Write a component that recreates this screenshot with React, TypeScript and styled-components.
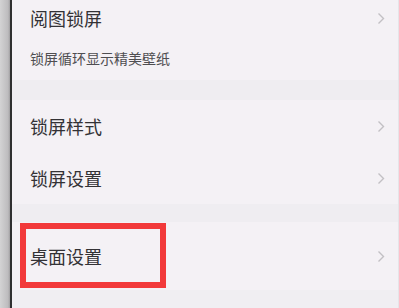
import React from "react";
import styled, { createGlobalStyle } from "styled-components";

const Global = createGlobalStyle`
  html, body { margin: 0; padding: 0; }
  body { width: 399px; height: 308px; overflow: hidden; background: #f3f0f4; }
`;

const Page = styled.div`
  display: flex;
  width: 399px;
  height: 308px;
  font-family: "Noto Sans CJK SC", "Noto Sans", sans-serif;
  background: #f4f1f5;
`;

const Edge = styled.div`
  width: 10px;
  flex: none;
  background: linear-gradient(to right, #d3d3d4, #bdbcbe 80%, #a09fa1);
  border-right: 2px solid #2f2f30;
`;

const Content = styled.div`
  flex: 1;
  display: flex;
  flex-direction: column;
  border-right: 1px solid #e6e4e8;
`;

const Row = styled.div<{ $h: number }>`
  position: relative;
  height: ${(p) => p.$h}px;
  display: flex;
  align-items: center;
  justify-content: space-between;
  padding: 0 13px 0 18px;
  flex: none;
`;

const Title = styled.span`
  font-size: 18px;
  line-height: 1;
  color: #333235;
`;

const Sub = styled.span`
  font-size: 14px;
  line-height: 1;
  color: #4f4e51;
`;

const Band = styled.div<{ $h: number }>`
  height: ${(p) => p.$h}px;
  flex: none;
  background: #efedf1;
`;

const Bottom = styled.div`
  flex: 1;
  background: #f0eef2;
`;

const Highlight = styled.div`
  position: absolute;
  left: 8px;
  top: 1px;
  width: 134px;
  height: 53px;
  border: 6px solid #f2393a;
  pointer-events: none;
`;

const Chevron = () => (
  <svg width="8" height="13" viewBox="0 0 8 13">
    <polyline points="1.5,1.5 6.5,6.5 1.5,11.5" fill="none" stroke="#c2c0c4" strokeWidth="1.4" />
  </svg>
);

export default function App() {
  return (
    <>
      <Global />
      <Page>
        <Edge />
        <Content>
          <Row $h={36}>
            <Title>阅图锁屏</Title>
            <Chevron />
          </Row>
          <Row $h={44}>
            <Sub>锁屏循环显示精美壁纸</Sub>
          </Row>
          <Band $h={20} />
          <Row $h={52}>
            <Title>锁屏样式</Title>
            <Chevron />
          </Row>
          <Row $h={52}>
            <Title>锁屏设置</Title>
            <Chevron />
          </Row>
          <Band $h={18} />
          <Row $h={68}>
            <Title>桌面设置</Title>
            <Chevron />
            <Highlight />
          </Row>
          <Bottom />
        </Content>
      </Page>
    </>
  );
}
